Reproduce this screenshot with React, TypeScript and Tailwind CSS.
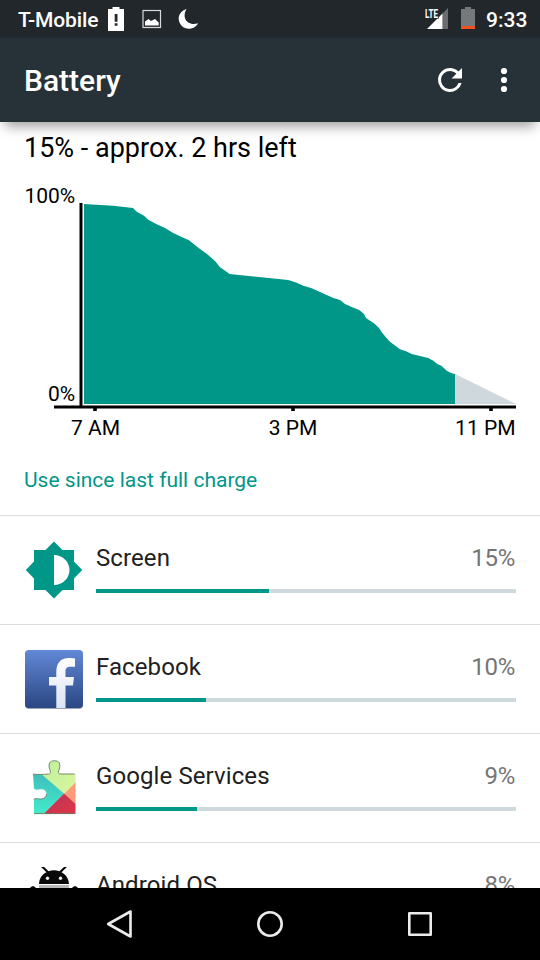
import type { ReactNode } from "react";

function StatusBar() {
  return (
    <header className="flex h-[38px] shrink-0 items-center bg-[#22272b] pl-[18px] pr-3 text-[21px] font-medium text-white">
      <span className="w-[81px] pt-px leading-[24px] tracking-[-0.15px] whitespace-nowrap">T-Mobile</span>
      <svg className="ml-[9px]" width="16" height="26" viewBox="108 6 16 26">
        <path fill="#fff" fillRule="evenodd" d="M112.500 7h7v2h4.500v22h-16V9h4.500zM114.700 14v7.800h2.800V14zM114.700 23.300v2.500h2.800v-2.500z" />
      </svg>
      <svg className="ml-[18px]" width="20" height="20" viewBox="142 9 20 20">
        <rect x="143" y="10.500" width="17.500" height="17" fill="none" stroke="#d8dadb" strokeWidth="1.200" />
        <path fill="#fff" d="M145 25.500v-4l3.500-2.500 2.500 2 4-2 3.700 3.500v3z" />
      </svg>
      <svg className="ml-4" width="21" height="22" viewBox="178 8 21 22">
        <path fill="#fff" d="M186.500 9c-5 1.500-8 5.500-7.800 10 .3 5.500 4.800 9.800 10.200 9.800 4 0 7.500-2.200 9.100-5.500-6 2-11.500-.3-13-5-.9-3.200-.2-6.500 1.500-9.300z" />
      </svg>
      <div className="ml-auto flex items-center">
        <svg width="25" height="24" viewBox="424 7 25 24">
          <path fill="#696d70" d="M442.500 13.500l5.500-5.500v21h-5.500z" />
          <path fill="#fff" d="M427 29l15.500-15.500V29z" />
          <path fill="#22272b" d="M424 7h15v11.500h-15z" />
          <text x="425" y="17.500" textLength="13" lengthAdjust="spacingAndGlyphs" className="fill-white font-['Roboto',sans-serif] text-[13px] font-bold">LTE</text>
        </svg>
        <svg className="ml-3" width="14" height="24" viewBox="461 7 14 24">
          <path fill="#75797b" d="M465 7h6v2h4v17h-14V9h4z" />
          <path fill="#f4511e" d="M461 26h14v3h-14z" />
        </svg>
        <span className="ml-[11px] w-[42px] pt-px leading-[24px] whitespace-nowrap">9:33</span>
      </div>
    </header>
  );
}

function AppBar() {
  return (
    <div className="relative z-10 flex h-[84px] shrink-0 items-center bg-[#263238] px-6 text-white shadow-[0_9px_12px_-5px_rgba(0,0,0,0.4)]">
      <h1 className="flex-1 pt-px text-[30px] leading-[36px] font-medium">Battery</h1>
      <svg width="36" height="36" viewBox="0 0 24 24" className="mr-8">
        <path fill="#fff" d="M17.650 6.350A7.960 7.960 0 0 0 12 4a8 8 0 1 0 7.730 10h-2.080A6 6 0 1 1 12 6c1.660 0 3.140.69 4.220 1.780L13 11h7V4z" />
      </svg>
      <svg width="8" height="26" viewBox="0 0 8 26" className="mr-2">
        <circle cx="4" cy="4" r="3.100" fill="#fff" />
        <circle cx="4" cy="13" r="3.100" fill="#fff" />
        <circle cx="4" cy="22" r="3.100" fill="#fff" />
      </svg>
    </div>
  );
}

const levels =
  "84,204 113,205.700 133,208 136.700,211.700 144,215.700 148.300,219.700 156.700,224.300 165,228 172.700,232.700 183.300,237.700 189,240.300 198.300,247.700 206.700,253.700 215,261 220,267.300 227.300,272.300 229.500,274 288.300,280 296.700,282.700 303.300,285.700 311.700,288.300 321.700,292.700 333.300,298 340,300 345,304 351.700,307 359.300,310 364,314 366,318 374,323.300 379.300,328.300 381.700,332.300 389.300,341.300 400,349.300 406,351.300 411.700,354 428.300,358 433.300,360.700 437.300,364 441.700,366 446.700,370.700 451.700,373.300 455,374";

function BatteryChart() {
  return (
    <svg width="540" height="270" viewBox="0 176 540 270" className="block shrink-0">
      <path fill="#cfd8dc" d="M455 374l61 30h-61z" />
      <polygon fill="#009688" points={`${levels} 455,404 84,404`} />
      <path fill="#000" d="M79.500 203h3v203h-3zM54 405.500h462v3H54zM93.200 408h3.600v3h-3.600zM291.200 408h3.600v3h-3.600zM489.200 408h3.600v3h-3.600z" />
      <g className="fill-black text-[21px]">
        <text x="75.200" y="203" textAnchor="end">100%</text>
        <text x="75.200" y="401" textAnchor="end">0%</text>
        <text x="95.500" y="435" textAnchor="middle">7 AM</text>
        <text x="293" y="435" textAnchor="middle">3 PM</text>
        <text x="515.500" y="435" textAnchor="end">11 PM</text>
      </g>
    </svg>
  );
}

function ScreenIcon() {
  return (
    <svg width="60" height="60" viewBox="0 0 60 60">
      <path fill="#009688" fillRule="evenodd" d="M30 1.500L38.500 10H50v11.500L58.200 30 50 38.500V50H38.500L30 58.500 21.500 50H10V38.500L1.800 30 10 21.500V10h11.500zM30 15v30c8.600 0 15.500-6.700 15.500-15S38.600 15 30 15z" />
    </svg>
  );
}

function FacebookIcon() {
  return (
    <svg width="60" height="60" viewBox="24 649 60 60">
      <defs>
        <linearGradient id="fb" x1="0" y1="0" x2="0" y2="1">
          <stop offset="0" stopColor="#6288d6" />
          <stop offset="1" stopColor="#2b4783" />
        </linearGradient>
        <linearGradient id="fbLetter" x1="0" y1="0" x2="0" y2="1">
          <stop offset="0" stopColor="#fff" />
          <stop offset="1" stopColor="#dce3f3" />
        </linearGradient>
      </defs>
      <rect x="25" y="650.500" width="58" height="58.300" rx="4" fill="#79849b" />
      <rect x="25" y="650" width="58" height="58" rx="4" fill="url(#fb)" />
      <path fill="url(#fbLetter)" d="M56.300 708v-22.500H49v-8.500h7.300v-5c0-9 4.500-14 12.200-14 2.500 0 5 .2 6.500.5v8.300h-4.500c-3.700 0-5 1.700-5 5v5.200H74l-1 8.500h-7.500V708z" />
    </svg>
  );
}

function ServicesIcon() {
  return (
    <svg width="60" height="60" viewBox="24 758 60 60">
      <defs>
        <clipPath id="puzzle">
          <path d="M33 774c5 .8 10 .4 15.500 0 2-.2 2.300-1.200 1.800-3-1-2.500-2-5.500-.7-8 1.500-3 8-3 9.700-.2 1.300 2.700.3 5.500-.7 8.200-.5 2 .2 3 2.400 3h14.500v40H34v-14c.3-2.500 4-1 6.500-1 3.500 0 6-2 6-5s-2.500-5-6-4.800c-2.800.2-5.800 1.300-6.500-1z" />
        </clipPath>
        <linearGradient id="teal" x1="0" y1="0" x2="0" y2="1">
          <stop offset="0" stopColor="#3fb9bb" />
          <stop offset="1" stopColor="#43eccb" />
        </linearGradient>
        <linearGradient id="lime" x1="0" y1="0" x2="1" y2="1">
          <stop offset="0" stopColor="#b9f09a" />
          <stop offset="1" stopColor="#dcf5a0" />
        </linearGradient>
        <linearGradient id="red" x1="0" y1="0" x2="1" y2="1">
          <stop offset="0" stopColor="#b93659" />
          <stop offset="1" stopColor="#df3446" />
        </linearGradient>
      </defs>
      <g clipPath="url(#puzzle)">
        <path fill="url(#lime)" d="M32 759h45v23.500l-13 12L32 776z" />
        <path fill="#ff9a7a" d="M76 782v23l-12-11z" />
        <path fill="url(#teal)" d="M32 770h4.500L64 793.500 43.500 814H32z" />
        <path fill="url(#red)" d="M64 793.500l12 11V814H43.500z" />
      </g>
      <path fill="none" stroke="#6e7f68" strokeWidth=".9" d="M33 774c5 .8 10 .4 15.500 0 2-.2 2.300-1.200 1.800-3-1-2.500-2-5.500-.7-8 1.500-3 8-3 9.700-.2 1.300 2.700.3 5.500-.7 8.200-.5 2 .2 3 2.400 3h13.500M34 800c.3-2.500 4-1 6.500-1 3.500 0 6-2 6-5M34 813.600h41" />
    </svg>
  );
}

function AndroidIcon() {
  return (
    <svg width="60" height="60" viewBox="24 867 60 60">
      <path fill="#090909" d="M39 884c.4-6.200 3.500-9.800 7.500-11.800L41 867h3l4.600 4.200c3.500-1.200 7.300-1.200 10.800 0L64 867h3l-5.500 5.200c4.200 2.200 7 5.600 7.500 11.800z" />
      <circle cx="47.500" cy="878.200" r="1.700" fill="#eee" />
      <circle cx="60.500" cy="878.200" r="1.700" fill="#eee" />
      <path fill="#b8b8b8" d="M39 885h30v3H39z" />
      <path fill="#090909" d="M39 888h30v22H39zM29.500 906v-16c.4-5 6.600-5 7 0v16zM71.500 906v-16c.4-5 6.600-5 7 0v16z" />
    </svg>
  );
}

type Usage = { name: string; percent: string; width: number; icon: ReactNode };

const usages: Usage[] = [
  { name: "Screen", percent: "15%", width: 173, icon: <ScreenIcon /> },
  { name: "Facebook", percent: "10%", width: 110, icon: <FacebookIcon /> },
  { name: "Google Services", percent: "9%", width: 101, icon: <ServicesIcon /> },
  { name: "Android OS", percent: "8%", width: 90, icon: <AndroidIcon /> },
];

function UsageRow({ name, percent, width, icon }: Usage) {
  return (
    <li className="flex h-[109px] shrink-0 gap-3 border-t border-[#dcdcdc] px-6 pt-6">
      <div className="h-[60px] w-[60px] shrink-0">{icon}</div>
      <div className="flex-1 pt-1">
        <div className="flex justify-between text-[24px] leading-[28px]">
          <span className="tracking-[0.1px] text-[#212121]">{name}</span>
          <span className="pr-px tracking-[-0.3px] text-[#757575]">{percent}</span>
        </div>
        <div className="mt-[17px] h-1 bg-[#cfd8dc]">
          <div className="h-full bg-[#009688]" style={{ width }} />
        </div>
      </div>
    </li>
  );
}

function NavBar() {
  return (
    <nav className="flex h-[72px] shrink-0 items-center justify-center gap-[114px] bg-black">
      <svg width="36" height="36" viewBox="0 0 36 36" fill="none" stroke="#ebebeb" strokeWidth="2.600" strokeLinejoin="round">
        <path d="M6.200 18L28.500 5.500v25z" />
      </svg>
      <svg width="36" height="36" viewBox="0 0 36 36" fill="none" stroke="#ebebeb" strokeWidth="2.600">
        <circle cx="18" cy="18" r="11.700" />
      </svg>
      <svg width="36" height="36" viewBox="0 0 36 36" fill="none" stroke="#ebebeb" strokeWidth="2.600" strokeLinejoin="round">
        <rect x="7.300" y="7.300" width="21.400" height="21.400" />
      </svg>
    </nav>
  );
}

export default function App() {
  return (
    <div className="flex h-[960px] w-[540px] flex-col overflow-hidden bg-white font-['Roboto',sans-serif]">
      <StatusBar />
      <AppBar />
      <main className="flex min-h-0 flex-1 flex-col overflow-hidden">
        <p className="h-[54px] shrink-0 pt-[9px] pl-6 text-[27px] leading-[34px] text-black">15% - approx. 2 hrs left</p>
        <BatteryChart />
        <h2 className="h-[69px] shrink-0 pt-[22px] pl-6 text-[21px] leading-[24px] text-[#009688]">Use since last full charge</h2>
        <ul className="flex flex-col">
          {usages.map((usage) => (
            <UsageRow key={usage.name} {...usage} />
          ))}
        </ul>
      </main>
      <NavBar />
    </div>
  );
}
